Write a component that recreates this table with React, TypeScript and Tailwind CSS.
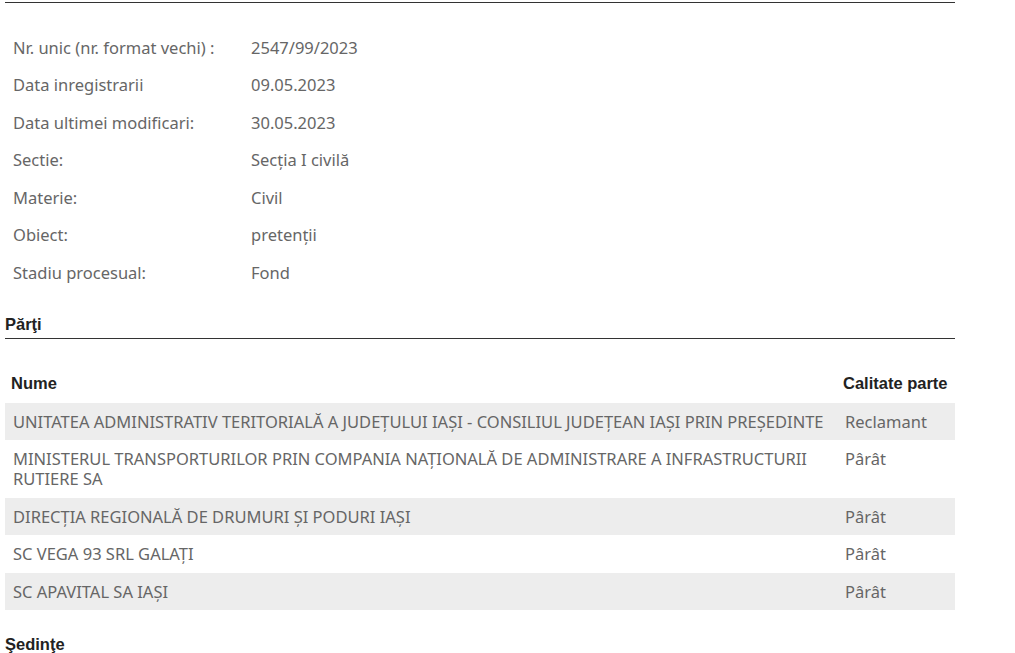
const info: [string, string][] = [
  ["Nr. unic (nr. format vechi) :", "2547/99/2023"],
  ["Data inregistrarii", "09.05.2023"],
  ["Data ultimei modificari:", "30.05.2023"],
  ["Sectie:", "Secția I civilă"],
  ["Materie:", "Civil"],
  ["Obiect:", "pretenții"],
  ["Stadiu procesual:", "Fond"],
];

const parti: [string, string][] = [
  ["UNITATEA ADMINISTRATIV TERITORIALĂ A JUDEȚULUI IAȘI - CONSILIUL JUDEȚEAN IAȘI PRIN PREȘEDINTE", "Reclamant"],
  ["MINISTERUL TRANSPORTURILOR PRIN COMPANIA NAȚIONALĂ DE ADMINISTRARE A INFRASTRUCTURII RUTIERE SA", "Pârât"],
  ["DIRECȚIA REGIONALĂ DE DRUMURI ȘI PODURI IAȘI", "Pârât"],
  ["SC VEGA 93 SRL GALAȚI", "Pârât"],
  ["SC APAVITAL SA IAȘI", "Pârât"],
];

const body = "font-['Noto_Sans',sans-serif] text-[16.5px] text-[#666]";
const heading = "font-['Liberation_Sans',Arial,sans-serif] font-bold text-[16.5px] leading-[20px] text-[#222]";

export default function App() {
  return (
    <div className="w-[1015px] h-[653px] overflow-hidden bg-white">
      <div className="ml-[5px] mt-[2px] w-[950px] border-t border-[#333]">
        {/* dosar details */}
        <div className={`pt-[26px] ${body}`}>
          {info.map(([k, v]) => (
            <div key={k} className="flex h-[37.5px] items-center leading-[20px]">
              <div className="w-[246px] pl-[8px]">{k}</div>
              <div>{v}</div>
            </div>
          ))}
        </div>

        {/* părți */}
        <h2 className={`mt-[22px] border-b border-[#333] pb-[4px] ${heading}`}>Părţi</h2>

        <div className="mt-[23px]">
          <div className={`grid grid-cols-[832px_118px] pt-[11px] pb-[10px] ${heading}`}>
            <div className="pl-[6px]">Nume</div>
            <div className="px-[6px]">Calitate parte</div>
          </div>
          {parti.map(([nume, calitate], i) => (
            <div
              key={nume}
              className={`grid grid-cols-[832px_118px] leading-[20px] ${body} ${i % 2 === 0 ? "bg-[#ededed]" : ""}`}
            >
              <div className="px-[8px] pt-[9.25px] pb-[8.25px]">{nume}</div>
              <div className="px-[8px] pt-[9.25px] pb-[8.25px]">{calitate}</div>
            </div>
          ))}
        </div>

        <h2 className={`mt-[24px] ${heading}`}>Şedinţe</h2>
      </div>
    </div>
  );
}
